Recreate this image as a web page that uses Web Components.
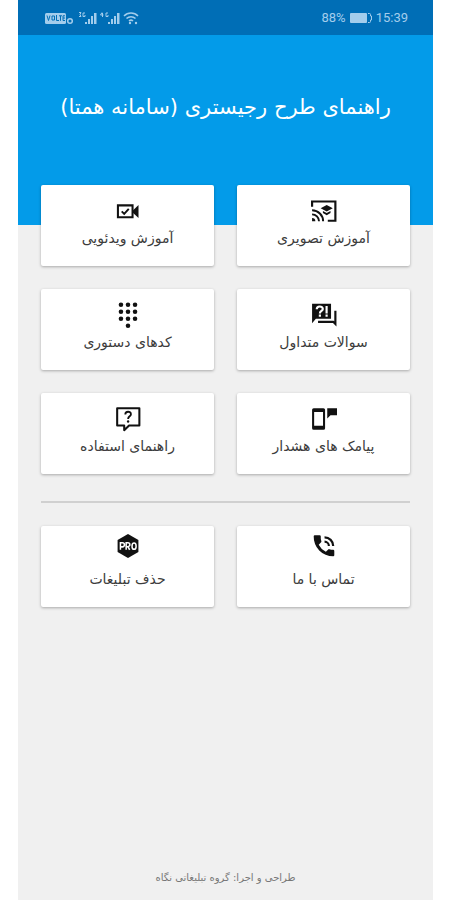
<!DOCTYPE html>
<html lang="fa" dir="rtl">
<head>
<meta charset="utf-8">
<meta name="viewport" content="width=device-width, initial-scale=1">
<title>راهنمای طرح رجیستری</title>
<style>
  body {
    margin: 0;
    background: #fff;
    font-family: "DejaVu Sans", sans-serif;
  }
</style>
</head>
<body>
<guide-app></guide-app>

<script>
// Icons, all drawn on a 24x24 grid
const ICONS = {
  cast: `
    <path d="M1 8V3.200h21.500v17.800h-7" fill="none" stroke="currentColor" stroke-width="2"/>
    <path d="M1 18.500v3h3a3 3 0 0 0-3-3z"/>
    <path d="M1 15.100a6.400 6.400 0 0 1 6.400 6.400M1 11.300a10.200 10.200 0 0 1 10.200 10.200" fill="none" stroke="currentColor" stroke-width="1.800"/>
    <path d="M14.500 6.500l-5.600 3 5.600 3 5.600-3zM11 11.900v2l3.500 2 3.500-2v-2l-3.500 1.900z"/>`,
  video: `
    <path d="M2.700 6.800h13.500v11H2.700z" fill="none" stroke="currentColor" stroke-width="1.900"/>
    <path d="M16.500 11.500l5.200-5v12l-5.200-5z"/>
    <path d="M6.200 12.300l2.300 2.300 4.200-4.600" fill="none" stroke="currentColor" stroke-width="1.800"/>`,
  chat: `
    <path d="M1 1.500h17.500v14H4.500l-3.500 4z"/>
    <path d="M6.500 18.300H20.500l2 2V8" fill="none" stroke="currentColor" stroke-width="2"/>
    <path d="M5.300 6.800c0-3.600 5.600-3.300 5.600-.4 0 1.900-2.700 1.900-2.700 4.200M14.400 3.700v6.900" fill="none" stroke="#fff" stroke-width="2"/>
    <path d="M7.200 11.600h2v2h-2zM13.400 11.600h2v2h-2z" fill="#fff"/>`,
  dialpad: [5.5, 12, 18.5].map(x => [2.5, 9, 15.5].map(y =>
    `<circle cx="${x}" cy="${y}" r="2.100"/>`).join('')).join('') + '<circle cx="12" cy="22" r="2.100"/>',
  phoneSms: `
    <path d="M2.500 2h9A1.500 1.500 0 0 1 13 3.500v17a1.500 1.500 0 0 1-1.500 1.500h-9A1.500 1.500 0 0 1 1 20.500v-17A1.500 1.500 0 0 1 2.500 2zm.4 3.500v12.800h8.200V5.500z" fill-rule="evenodd"/>
    <path d="M15 2h9v6.500h-6L15 11.500z"/>`,
  help: `
    <path d="M2 2h20.500v16H13l-4.500 4.300V18H2z" fill="none" stroke="currentColor" stroke-width="1.900" stroke-linejoin="round"/>
    <path d="M9.500 7.800c0-3.400 5.200-3.200 5.200-.3 0 2-2.600 2-2.600 4.400" fill="none" stroke="currentColor" stroke-width="1.700"/>
    <circle cx="12.100" cy="14.300" r="1.100"/>`,
  call: `
    <path d="M20.500 15.500c-1.250 0-2.450-.2-3.570-.57a1 1 0 0 0-1.020.24l-2.200 2.200a15.050 15.050 0 0 1-6.590-6.580l2.200-2.210a1 1 0 0 0 .25-1A11.360 11.360 0 0 1 9 3a1 1 0 0 0-1-1H3.500a1 1 0 0 0-1 1 18 18 0 0 0 18 18.500 1 1 0 0 0 1-1v-4a1 1 0 0 0-1-1z"/>
    <path d="M19.500 12h2a9 9 0 0 0-9-9v2a7 7 0 0 1 7 7zm-4 0h2a5 5 0 0 0-5-5v2a3 3 0 0 1 3 3z"/>`,
  pro: `
    <path d="M12 1l9.600 5.500v11L12 23l-9.600-5.500v-11z"/>
    <path d="M5 15.500V9h1.800a1.900 1.900 0 0 1 0 3.800H5M10.300 15.500V9h1.600a1.800 1.800 0 0 1 0 3.600h-1.600M12 12.600l1.500 2.900" fill="none" stroke="#fff" stroke-width="1.400"/>
    <ellipse cx="17.600" cy="12.200" rx="1.900" ry="2.900" fill="none" stroke="#fff" stroke-width="1.400"/>`
}

class StatusBar extends HTMLElement {
  static Styles = `
    :host {
      display: flex;
      align-items: center;
      justify-content: space-between;
      direction: ltr;
      height: 35px;
      padding: 0 25px 0 26px;
      background: #006eb6;
      color: #a3cdec;
      font: 13px/16px Roboto, sans-serif;
    }
    div {
      display: flex;
      align-items: center;
      gap: 4px;
    }
    svg { display: block; fill: currentColor; }
  `

  connectedCallback () {
    this.attachShadow({ mode: 'open' }).innerHTML = /* HTML */`
      <style>${StatusBar.Styles}</style>
      <div>
        <svg width="95" height="14" viewBox="0 0 95 14" aria-hidden="true">
          <rect x="1" y="2" width="21" height="11" rx="1.500"/>
          <path d="M3 4.500l1.500 5L6 4.500M8 5h2.500v4H8zM12.500 4v5.500H15M15 4.800h3M16.500 4.800v5M21 4.800h-2v4.700h2M19 7h2" fill="none" stroke="#006eb6"/>
          <circle cx="26" cy="10" r="2.300" fill="none" stroke="currentColor" stroke-width="1.500"/>
          <path d="M35 1.500h2l-1 2 1 2h-2M41 2h-2v3.500h2V4M58 1.500L56.500 4h3M58.500 2v4M64 2h-2v3.500h2V4" fill="none" stroke="currentColor"/>
          <path d="M41 11h2v2h-2zM44 8h2v5h-2zM47 5h2v8h-2zM50 2h2.500v11H50zM64 11h2v2h-2zM67 8h2v5h-2zM70 5h2v8h-2zM73 2h2.500v11H73z"/>
          <path d="M80 5a9.500 9.500 0 0 1 14 0M82.500 7.500a6.500 6.500 0 0 1 9 0M85 10a3 3 0 0 1 4 0" fill="none" stroke="currentColor" stroke-width="1.500"/>
          <circle cx="86" cy="12" r="1.200"/>
          <circle cx="92" cy="12" r="1.200"/>
        </svg>
      </div>
      <div>
        <span>88%</span>
        <svg width="22" height="10" viewBox="0 0 22 10" aria-hidden="true">
          <rect width="17" height="10" rx="1"/>
          <path d="M18 .5h1.500a1 1 0 0 1 1 1V3h1v4h-1v1.500a1 1 0 0 1-1 1H18" fill="none" stroke="currentColor"/>
        </svg>
        <span>15:39</span>
      </div>
    `
  }
}

class PageHeader extends HTMLElement {
  static Styles = `
    :host {
      display: block;
      padding: 56px 16px 102px;
      background: #039be9;
      color: #fff;
      text-align: center;
    }
    h1 {
      margin: 0;
      font-size: 21px;
      line-height: 32px;
      font-weight: 400;
    }
  `

  connectedCallback () {
    this.attachShadow({ mode: 'open' }).innerHTML = /* HTML */`
      <style>${PageHeader.Styles}</style>
      <h1><slot></slot></h1>
    `
  }
}

class MenuCard extends HTMLElement {
  static Styles = `
    :host { display: block; }
    button {
      display: flex;
      flex-direction: column;
      align-items: center;
      gap: 2px;
      width: 100%;
      padding: 13px 4px 16px;
      border: 0;
      border-radius: 2px;
      background: #fff;
      box-shadow: 0 1px 3px rgba(0, 0, 0, .3);
      color: #111;
      font: inherit;
      cursor: pointer;
    }
    /* icon sits further from its label */
    :host([spaced]) button {
      gap: 8px;
      padding-top: 7px;
    }
    svg {
      width: 26px;
      height: 26px;
      fill: currentColor;
      overflow: visible;
    }
    span {
      color: #3c3c3c;
      font-size: 14px;
      line-height: 24px;
      white-space: nowrap;
    }
  `

  connectedCallback () {
    this.attachShadow({ mode: 'open' }).innerHTML = /* HTML */`
      <style>${MenuCard.Styles}</style>
      <button type="button">
        <svg viewBox="0 0 24 24" aria-hidden="true">${ICONS[this.getAttribute('icon')]}</svg>
        <span><slot></slot></span>
      </button>
    `
  }
}

class GuideApp extends HTMLElement {
  static Styles = `
    :host {
      display: flex;
      flex-direction: column;
      min-height: 100vh;
      margin: 0 17px 0 18px;
      background: #f0f0f0;
    }
    main {
      flex: 1;
      margin-top: -40px;
      padding: 0 23px;
    }
    section {
      display: grid;
      grid-template-columns: 1fr 1fr;
      gap: 23px;
    }
    hr {
      height: 2px;
      margin: 27px 0 23px;
      border: 0;
      background: #d0d0d0;
    }
    footer {
      padding: 12px 0;
      color: #777;
      font-size: 10px;
      line-height: 20px;
      text-align: center;
    }
  `

  connectedCallback () {
    this.attachShadow({ mode: 'open' }).innerHTML = /* HTML */`
      <style>${GuideApp.Styles}</style>
      <status-bar></status-bar>
      <page-header>راهنمای طرح رجیستری (سامانه همتا)</page-header>
      <main>
        <section>
          <menu-card icon="cast">آموزش تصویری</menu-card>
          <menu-card icon="video">آموزش ویدئویی</menu-card>
          <menu-card icon="chat">سوالات متداول</menu-card>
          <menu-card icon="dialpad">کدهای دستوری</menu-card>
          <menu-card icon="phoneSms">پیامک های هشدار</menu-card>
          <menu-card icon="help">راهنمای استفاده</menu-card>
        </section>
        <hr>
        <section>
          <menu-card icon="call" spaced>تماس با ما</menu-card>
          <menu-card icon="pro" spaced>حذف تبلیغات</menu-card>
        </section>
      </main>
      <footer>طراحی و اجرا: گروه تبلیغاتی نگاه</footer>
    `
  }
}

customElements.define('status-bar', StatusBar)
customElements.define('page-header', PageHeader)
customElements.define('menu-card', MenuCard)
customElements.define('guide-app', GuideApp)
</script>
</body>
</html>
